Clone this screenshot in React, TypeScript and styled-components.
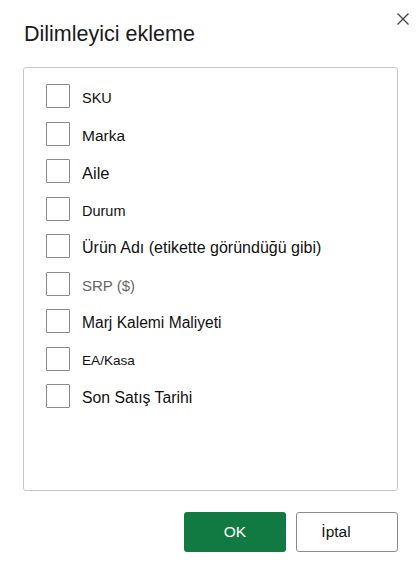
import styled, { createGlobalStyle } from 'styled-components'

const GlobalStyle = createGlobalStyle`
  html, body {
    margin: 0;
    padding: 0;
    background: #ffffff;
  }
  body {
    font-family: 'Liberation Sans', Arial, sans-serif;
  }
`

type Field = {
  label: string
  size: number
  muted?: boolean
}

const fields: Field[] = [
  { label: 'SKU', size: 14.5 },
  { label: 'Marka', size: 15.5 },
  { label: 'Aile', size: 16.5 },
  { label: 'Durum', size: 14.5 },
  { label: 'Ürün Adı (etikette göründüğü gibi)', size: 16 },
  { label: 'SRP ($)', size: 15, muted: true },
  { label: 'Marj Kalemi Maliyeti', size: 15.6 },
  { label: 'EA/Kasa', size: 13.6 },
  { label: 'Son Satış Tarihi', size: 15.8 },
]

function CloseIcon() {
  return (
    <svg width="12" height="12" viewBox="0 0 12 12" fill="none">
      <path d="M0.5 0.5L11.5 11.5M11.5 0.5L0.5 11.5" stroke="#444" strokeWidth="1.3" />
    </svg>
  )
}

function App() {
  return (
    <>
      <GlobalStyle />
      <Dialog>
        <Header>
          <Title>Dilimleyici ekleme</Title>
          <CloseButton aria-label="Kapat">
            <CloseIcon />
          </CloseButton>
        </Header>
        <ListBox>
          {fields.map((field) => (
            <Row key={field.label}>
              <Checkbox />
              <Label $size={field.size} $muted={field.muted}>
                {field.label}
              </Label>
            </Row>
          ))}
        </ListBox>
        <Footer>
          <PrimaryButton>OK</PrimaryButton>
          <SecondaryButton>İptal</SecondaryButton>
        </Footer>
      </Dialog>
    </>
  )
}

export default App

const Dialog = styled.div`
  width: 418px;
  height: 577px;
  box-sizing: border-box;
  padding: 0 20px 0 23px;
  display: flex;
  flex-direction: column;
  background: #ffffff;
`

const Header = styled.div`
  display: flex;
  justify-content: space-between;
  align-items: flex-start;
`

const Title = styled.h1`
  margin: 21px 0 0 1px;
  font-size: 21.5px;
  line-height: 26px;
  font-weight: 400;
  color: #1a1a1a;
`

const CloseButton = styled.button`
  margin: 13px -11px 0 0;
  padding: 0;
  width: 12px;
  height: 12px;
  border: none;
  background: none;
  display: flex;
  cursor: pointer;
`

const ListBox = styled.div`
  margin-top: 20px;
  height: 424px;
  box-sizing: border-box;
  border: 1px solid #c8c8c8;
  border-radius: 3px;
  padding: 16px 22px;
  display: flex;
  flex-direction: column;
  gap: 13.5px;
`

const Row = styled.label`
  display: flex;
  align-items: center;
  gap: 12px;
  height: 24px;
`

const Checkbox = styled.span`
  width: 24px;
  height: 24px;
  box-sizing: border-box;
  border: 1px solid #8a8a8a;
  border-radius: 1px;
  background: #ffffff;
  flex-shrink: 0;
`

const Label = styled.span<{ $size: number; $muted?: boolean }>`
  margin-top: 4px;
  font-size: ${(p) => p.$size}px;
  color: ${(p) => (p.$muted ? '#666666' : '#111111')};
  white-space: nowrap;
`

const Footer = styled.div`
  margin-top: 21px;
  display: flex;
  justify-content: flex-end;
  gap: 10px;
`

const BaseButton = styled.button`
  width: 102px;
  height: 40px;
  box-sizing: border-box;
  border-radius: 3px;
  font-family: 'Liberation Sans', Arial, sans-serif;
  font-size: 15.5px;
  cursor: pointer;
`

const PrimaryButton = styled(BaseButton)`
  border: none;
  background: #117a43;
  color: #ffffff;
`

const SecondaryButton = styled(BaseButton)`
  border: 1px solid #8a8a8a;
  background: #ffffff;
  color: #111111;
  padding: 0 22px 0 0;
`
